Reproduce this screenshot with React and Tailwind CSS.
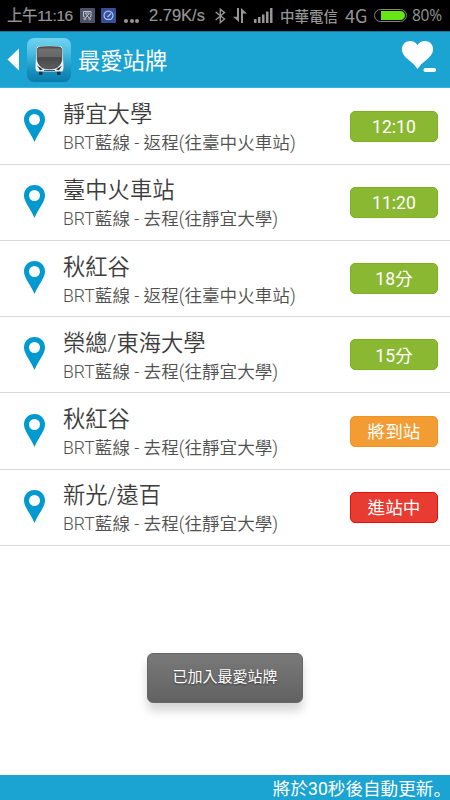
const stops = [
  { id: 1, name: '靜宜大學', route: 'BRT藍線 - 返程(往臺中火車站)', time: '12:10', status: 'scheduled' },
  { id: 2, name: '臺中火車站', route: 'BRT藍線 - 去程(往靜宜大學)', time: '11:20', status: 'scheduled' },
  { id: 3, name: '秋紅谷', route: 'BRT藍線 - 返程(往臺中火車站)', time: '18分', status: 'scheduled' },
  { id: 4, name: '榮總/東海大學', route: 'BRT藍線 - 去程(往靜宜大學)', time: '15分', status: 'scheduled' },
  { id: 5, name: '秋紅谷', route: 'BRT藍線 - 去程(往靜宜大學)', time: '將到站', status: 'near' },
  { id: 6, name: '新光/遠百', route: 'BRT藍線 - 去程(往靜宜大學)', time: '進站中', status: 'arriving' },
];

const badgeStyles = {
  scheduled: 'bg-[#8ab833] border-[#80b01d]',
  near: 'bg-[#f39c33] border-[#f0941d]',
  arriving: 'bg-[#e83c32] border-[#e60f0c]',
};

const StatusBar = () => (
  <div className="flex h-[31px] items-center bg-black text-[16.5px] whitespace-nowrap text-[#969696]">
    <span className="ml-[7px] w-[73px] font-['Liberation_Sans','Noto_Sans_CJK_TC',sans-serif] text-[15.5px] tracking-[-0.4px] [-webkit-text-stroke:0.2px_#969696]">
      上午11:16
    </span>
    <svg className="h-[15px] w-[15px]" viewBox="0 0 15 15" fill="none">
      <rect width="15" height="15" rx="1" fill="#4b526b" />
      <path d="M4.5 3.5H3.5V8.5H4.5M4 3.5H11V8.5H10M5 5L9.5 10.5M9.5 5L5 10.5M5.500 5H9" stroke="#c4c4c4" strokeWidth="1" />
      <circle cx="4.8" cy="10.8" r="1" stroke="#c4c4c4" strokeWidth=".8" />
      <circle cx="9.8" cy="10.8" r="1" stroke="#c4c4c4" strokeWidth=".8" />
    </svg>
    <svg className="ml-1.5 h-[15px] w-[15px]" viewBox="0 0 15 15" fill="none">
      <rect width="15" height="15" rx="1" fill="#34509c" />
      <path d="M5 11.3A4.500 4.500 0 1 1 10 11.3M5 11.3H10M6.500 9L10 5.5" stroke="#b3c1e4" strokeWidth="1.2" />
    </svg>
    <div className="mt-2.5 ml-[8px] flex gap-[1.5px]">
      <span className="h-[4px] w-[4px] rounded-full bg-[#969696]" />
      <span className="h-[4px] w-[4px] rounded-full bg-[#969696]" />
      <span className="h-[4px] w-[4px] rounded-full bg-[#969696]" />
    </div>
    <span className="ml-[10px] w-[66px] font-['Liberation_Sans',sans-serif] text-[16.5px] [-webkit-text-stroke:0.2px_#969696]">2.79K/s</span>
    <svg className="h-[16px] w-[11px]" viewBox="0 0 11 16" fill="none" stroke="#969696" strokeWidth="1.4">
      <path d="M.7 4L9.5 11L5.3 14.6V1.2L9.5 4.6L.7 12" />
    </svg>
    <svg className="ml-[7px] h-[15px] w-[14px]" viewBox="0 0 14 15" fill="#969696">
      <path d="M4 0H6V14L0 8.7H4ZM8 0L14 5.6H10V15H8Z" />
    </svg>
    <svg className="ml-[7px] h-[15px] w-[19px]" viewBox="0 0 19 15" fill="#969696">
      <rect x="0" y="11" width="2.5" height="4" />
      <rect x="4" y="9" width="2.5" height="6" />
      <rect x="8" y="6.500" width="2.5" height="8.500" />
      <rect x="12" y="3.500" width="2.5" height="11.500" />
      <rect x="16" y="0" width="2.5" height="15" />
    </svg>
    <span className="ml-[7px] w-[65px] font-['Noto_Sans_CJK_TC',sans-serif] text-[14.5px] font-medium">中華電信</span>
    <span className="w-[29px] font-['Noto_Sans_CJK_TC',sans-serif] text-[18px]">4G</span>
    <div className="h-[13px] w-[33px] rounded-full border-[1.5px] border-[#858585] p-px pl-[6px]">
      <div className="h-full rounded-r-full bg-[#66e414]" />
    </div>
    <span className="mt-px ml-[5px] font-['Open_Sans',sans-serif] text-[15.5px] tracking-[-0.3px]">80%</span>
  </div>
);

const BusLogo = () => (
  <svg className="h-11 w-11" viewBox="0 0 44 44">
    <defs>
      <linearGradient id="logoBg" x1="0" y1="0" x2="0" y2="1">
        <stop offset="0" stopColor="#74d3ef" />
        <stop offset=".35" stopColor="#4abce0" />
        <stop offset=".75" stopColor="#168fbe" />
        <stop offset="1" stopColor="#0b7baa" />
      </linearGradient>
      <linearGradient id="glass" x1="0" y1="0" x2="0" y2="1">
        <stop offset="0" stopColor="#505050" />
        <stop offset=".15" stopColor="#707070" />
        <stop offset=".45" stopColor="#666" />
        <stop offset=".5" stopColor="#484848" />
        <stop offset="1" stopColor="#5d5d5d" />
      </linearGradient>
    </defs>
    <rect width="44" height="44" rx="7" fill="url(#logoBg)" />
    <rect x="12" y="33" width="3.500" height="4" rx="1" fill="#1c3140" />
    <rect x="30" y="33" width="3.500" height="4" rx="1" fill="#1c3140" />
    <path d="M12 8.200Q22.500 7.200 33 8.200Q35.200 8.500 35.500 11L36.500 28Q36.800 33.500 34.500 33.500H10.500Q8.200 33.500 8.500 28L9.500 11Q9.800 8.500 12 8.200Z" fill="#eef4f8" />
    <path d="M12.500 9Q22.500 8 32.500 9Q34.800 9.500 34.800 12V22Q34 27 30 29.500Q27 31 22.500 31Q18 31 15 29.500Q11 27 10.200 22V12Q10.200 9.500 12.500 9Z" fill="url(#glass)" stroke="#2c2c2c" strokeWidth=".6" />
    <path d="M10 27.500L16 31.500L13 32.300ZM35 27.500L29 31.500L32 32.300Z" fill="#263845" />
    <path d="M17 32.500H28" stroke="#40586a" strokeWidth="1" />
  </svg>
);

const Header = () => (
  <header className="flex h-[57px] items-center border-t border-b border-t-[#167aa0] border-b-[#35b5df] bg-[#1ba3d2] pr-[14px] pl-[7px]">
    <svg className="h-[23px] w-[12px]" viewBox="0 0 12 23">
      <path d="M12 .5V22.500L.5 11.500Z" fill="white" />
    </svg>
    <div className="ml-2">
      <BusLogo />
    </div>
    <h1 className="mt-[5px] ml-[7px] text-[22.300px] text-white">最愛站牌</h1>
    <svg className="-mt-[5px] ml-auto h-[32px] w-[35px]" viewBox="0 0 35 32" fill="white">
      <path d="M16.500 4.300C13.500-1 6-1.200 2.500 3.200C-.5 8 1 12.500 4.800 16.500Q9 20 13 23.500L16.500 28L20 23.500Q24 20 28 16.500C32 12.500 33.500 8 30.500 3.200C27-1.200 19.500-1 16.500 4.300Z" />
      <rect x="22.500" y="27" width="12.500" height="4" rx="1.800" />
    </svg>
  </header>
);

const StopRow = ({ stop }) => (
  <li className="flex h-[76.250px] items-center border-b border-[#d9d9d9] pr-[12px] pl-[24px]">
    <svg className="-mt-[2px] h-[33px] w-[21px] shrink-0" viewBox="0 0 21 33">
      <path
        d="M10.500 0C4.500 0 0 4.500 0 10.500C0 17 6 22.500 10.500 33C15 22.500 21 17 21 10.500C21 4.500 16.500 0 10.500 0ZM10.500 5A5.500 5.500 0 1 1 10.500 16A5.500 5.500 0 1 1 10.500 5Z"
        fill="#0099d0"
        fillRule="evenodd"
      />
    </svg>
    <div className="mt-[5px] ml-[18px] flex-1 whitespace-nowrap">
      <h2 className="text-[22.300px] leading-[30px] font-[350] text-[#3c3c3c]">{stop.name}</h2>
      <p className="text-[17.600px] leading-[29px] font-[350] text-[#505050]">{stop.route}</p>
    </div>
    <span
      className={`flex h-[31px] w-[88px] items-center justify-center rounded-[5px] border pt-[2px] text-[17.600px] text-white ${badgeStyles[stop.status]}`}
    >
      {stop.time}
    </span>
  </li>
);

const App = () => {
  return (
    <div className="relative flex h-[800px] w-[450px] flex-col overflow-hidden bg-white font-['Roboto','Noto_Sans_CJK_TC',sans-serif]">
      <StatusBar />
      <Header />
      <ul className="flex-1 pt-[0.400px]">
        {stops.map((stop) => (
          <StopRow key={stop.id} stop={stop} />
        ))}
      </ul>
      <footer className="flex h-[25px] items-center justify-end bg-[#1ba3d2] pt-[3px] text-[17.600px] text-white">
        將於30秒後自動更新
        <span className="-mr-[1px] font-['Noto_Sans_CJK_JP',sans-serif]" lang="ja">。</span>
      </footer>

      {/* Toast */}
      <div className="absolute top-[653px] left-[147px] flex h-[50px] w-[156px] items-center justify-center rounded-md border border-[#666] bg-linear-to-b from-[#797979] to-[#626262] pb-[2px] text-[15px] text-white shadow-[0_8px_10px_rgba(0,0,0,0.16)] text-shadow-[0_1px_2px_rgba(0,0,0,0.5)]">
        已加入最愛站牌
      </div>
    </div>
  );
};

export default App;
